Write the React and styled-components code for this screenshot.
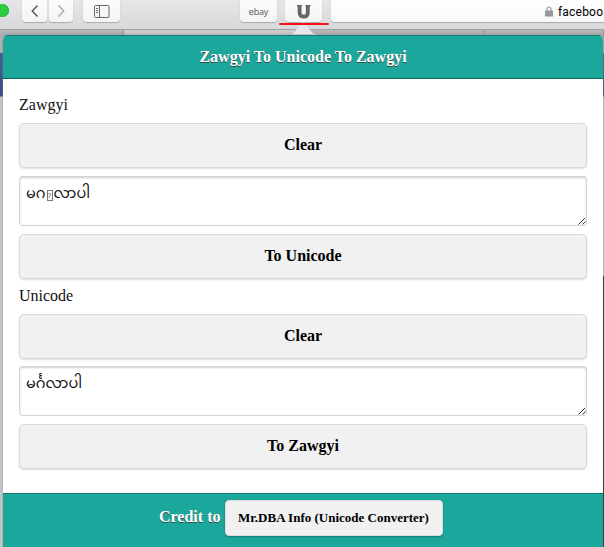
import React from "react";
import styled, { createGlobalStyle } from "styled-components";

const Global = createGlobalStyle`
  * { box-sizing: border-box; }
  html, body { margin: 0; padding: 0; overflow: hidden; }
  body { width: 604px; height: 547px; font-family: "Liberation Serif", "Times New Roman", serif; color: #111; }
`;

const Browser = styled.div`
  position: relative;
  width: 604px;
  height: 547px;
  overflow: hidden;
  background: #c9cacf;
`;

const Toolbar = styled.header`
  position: relative;
  display: flex;
  height: 29px;
  background: linear-gradient(#e6e5e8, #d9d8db);
  font-family: "Liberation Sans", Arial, sans-serif;
`;

const GreenLight = styled.span`
  flex: none;
  width: 9px;
  height: 13px;
  margin: 4px 13px 0 0;
  border-radius: 0 7px 7px 0;
  background: #2ccb42;
  box-shadow: inset -1px 0 #24b638;
`;

const ToolButton = styled.button`
  display: flex;
  flex: none;
  align-items: center;
  justify-content: center;
  width: ${(p) => p.$w}px;
  height: 26px;
  margin: -4px ${(p) => p.$gap}px 0 0;
  padding: 4px 0 0;
  border: 0;
  border-radius: 4px;
  background: linear-gradient(#fdfdfd, #f4f4f4);
  box-shadow: 0 0.5px 1px #aaa9ac;
  color: #555;
  font: 9px "Open Sans", sans-serif;
  letter-spacing: -0.2px;
`;

const AddressBar = styled.div`
  display: flex;
  flex: 1;
  align-items: center;
  min-width: 0;
  height: 26px;
  margin-top: -4px;
  padding: 5px 0 0 214px;
  border-radius: 4px 0 0 4px;
  background: linear-gradient(#fff, #f8f8f8);
  box-shadow: 0 0.5px 1px #aaa9ac;
  color: #000;
  font: 12px Roboto, sans-serif;
  letter-spacing: 0.2px;
  white-space: nowrap;
  svg { flex: none; margin-right: 5px; }
`;

const RedMark = styled.div`
  position: absolute;
  z-index: 3;
  left: 279px;
  top: 23px;
  width: 50px;
  height: 2px;
  border-radius: 1px;
  background: #fa1018;
`;

const TabStrip = styled.div`
  display: grid;
  grid-template-columns: 124px 181px 180px 1fr;
  height: 8px;
  border-top: 1px solid #a1a0a2;
`;

const Tab = styled.div`
  border-right: 1px solid #959495;
  background: ${(p) => (p.$active ? "linear-gradient(#d0cfd1, #c5c4c6)" : "linear-gradient(#b9b8ba, #aaa9ab)")};
`;

const PageEdge = styled.div`
  height: 510px;
  background: linear-gradient(#b3b3b5 0 16px, #3d5791 16px 18px, #3d5791 26px, #2f4980 59px, #c9cacf 60px);
`;

const Arrow = styled.svg`
  position: absolute;
  z-index: 2;
  left: 289px;
  top: 22px;
`;

const DarkEdge = styled.div`
  position: absolute;
  right: 0;
  top: 276px;
  width: 1px;
  height: 271px;
  background: #1b1b1f;
`;

const Popover = styled.main`
  position: absolute;
  z-index: 1;
  left: 3px;
  top: 35px;
  display: flex;
  flex-direction: column;
  width: 600px;
  height: 520px;
  overflow: hidden;
  border-radius: 5px 5px 0 0;
  background: #fff;
  box-shadow: 0 0 1px #777, 0 0 4px #8888;
`;

const Title = styled.h1`
  flex: none;
  height: 44px;
  margin: 0;
  border-top: 1px solid #137c73;
  border-bottom: 1px solid #0b655f;
  background: #1ca79d;
  color: #fff;
  font-size: 16px;
  line-height: 42px;
  text-align: center;
  text-shadow: 0 1px 0 #444;
`;

const Content = styled.div`
  flex: none;
  height: 414px;
  padding: 16px 16px 0;
`;

const Group = styled.section`
  padding-bottom: 7px;
`;

const Label = styled.div`
  height: 28px;
  font-size: 16px;
  line-height: 20px;
`;

const ActionButton = styled.button`
  display: block;
  width: 568px;
  height: 45px;
  padding: 0 0 1px;
  border: 1px solid #d9d9d9;
  border-radius: 5px;
  background: #f1f1f1;
  box-shadow: 0 1px 2px #0002;
  color: #000;
  font: bold 16px "Liberation Serif", serif;
`;

const Field = styled.div`
  position: relative;
  height: 50px;
  margin: ${(p) => p.$gap}px 0 8px;
  svg { position: absolute; right: 1px; bottom: 1px; }
`;

const TextArea = styled.div`
  width: 568px;
  height: 50px;
  padding: 6px 6px;
  border: 1px solid #d5d5d5;
  border-radius: 3px;
  outline: 0;
  background: #fff;
  box-shadow: inset 0 1px 2px #0003;
  color: #111;
  font: 14.5px/21px "Liberation Serif", "Noto Sans Myanmar", "Myanmar Text", serif;
  white-space: pre-wrap;
`;

const MissingGlyph = styled.span`
  display: inline-block;
  width: 6px;
  height: 11px;
  margin: 0 1px;
  border: 1px solid #777;
  color: #555;
  font: 8px/9px "Liberation Sans", sans-serif;
  text-align: center;
  text-indent: -0.5px;
  vertical-align: 0;
`;

const Footer = styled.footer`
  display: flex;
  flex: 1;
  align-items: flex-start;
  gap: 5px;
  padding: 6px 0 0 156px;
  border-top: 1px solid #0d7971;
  background: #1ca79d;
  color: #fff;
  font-size: 16px;
  font-weight: bold;
  line-height: 34px;
  text-shadow: 0 1px 0 #444;
`;

const Credit = styled.a`
  width: 218px;
  height: 36px;
  padding-right: 2px;
  border: 1px solid #ddd;
  border-radius: 4px;
  background: #f1f1f1;
  box-shadow: 0 1px 2px #0004;
  color: #000;
  font-size: 13px;
  line-height: 34px;
  text-align: center;
  text-shadow: none;
`;

const Chevron = ({ d, color }) => (
  <svg width="8" height="14" viewBox="0 0 8 14" fill="none" stroke={color} strokeWidth="1.4">
    <path d={d} />
  </svg>
);

const Grip = () => (
  <svg width="8" height="8" viewBox="0 0 8 8" stroke="#333" strokeWidth="1">
    <path d="M.5 7.5 7 1M4.5 7.5 7.5 4.5" />
  </svg>
);

function Converter({ name, children, action, fieldGap }) {
  return (
    <Group>
      <Label>{name}</Label>
      <ActionButton>Clear</ActionButton>
      <Field $gap={fieldGap}>
        <TextArea role="textbox" contentEditable suppressContentEditableWarning spellCheck={false}>{children}</TextArea>
        <Grip />
      </Field>
      <ActionButton>{action}</ActionButton>
    </Group>
  );
}

export default function App() {
  return (
    <Browser>
      <Global />
      <Toolbar>
        <GreenLight />
        <ToolButton $w={25} $gap={2}><Chevron d="M6.5 1.5 1.2 7l5.3 5.5" color="#555" /></ToolButton>
        <ToolButton $w={24} $gap={10}><Chevron d="M1.5 1.5 6.8 7l-5.3 5.5" color="#aaa" /></ToolButton>
        <ToolButton $w={37} $gap={120}>
          <svg width="16" height="13" viewBox="0 0 16 13" fill="none" stroke="#666">
            <rect x=".5" y=".5" width="14.5" height="12" rx="1" />
            <path d="M5.5 1v11M2 3.5h2M2 5.5h2M2 7.5h2" />
          </svg>
        </ToolButton>
        <ToolButton $w={37} $gap={8}>ebay</ToolButton>
        <ToolButton $w={37} $gap={9}>
          <svg width="15" height="15" viewBox="0 0 15 15" fill="none" stroke="#666">
            <path d="M3.6 1v7.4c0 2.9 1.3 4.2 4.2 4.2s4-1.3 4-4.2V1" strokeWidth="3.8" />
            <path d="M1 1.7h5M9.6 1.7h5" strokeWidth="1.4" />
          </svg>
        </ToolButton>
        <AddressBar>
          <svg width="8" height="11" viewBox="0 0 8 11" fill="#999">
            <rect y="4.5" width="8" height="6" rx=".5" />
            <path d="M2 5V3a2 2 0 0 1 4 0v2" fill="none" stroke="#999" strokeWidth="1.2" />
          </svg>
          faceboo
        </AddressBar>
      </Toolbar>
      <RedMark />
      <TabStrip><Tab /><Tab $active /><Tab /><Tab /></TabStrip>
      <PageEdge />
      <Arrow width="28" height="13" viewBox="0 0 28 13">
        <path d="M0 12.5C6 12.5 9 3 12 .8q2-1.4 4 0C19 3 22 12.5 28 12.5z" fill="#e6e6eb" stroke="#b5b5ba" strokeWidth=".5" />
      </Arrow>
      <Popover>
        <Title>Zawgyi To Unicode To Zawgyi</Title>
        <Content>
          <Converter name="Zawgyi" action="To Unicode" fieldGap={8}>
            မဂ<MissingGlyph>?</MissingGlyph>လာပါ
          </Converter>
          <Converter name="Unicode" action="To Zawgyi" fieldGap={7}>မင်္ဂလာပါ</Converter>
        </Content>
        <Footer>
          <span>Credit to</span>
          <Credit>Mr.DBA Info (Unicode Converter)</Credit>
        </Footer>
      </Popover>
      <DarkEdge />
    </Browser>
  );
}
